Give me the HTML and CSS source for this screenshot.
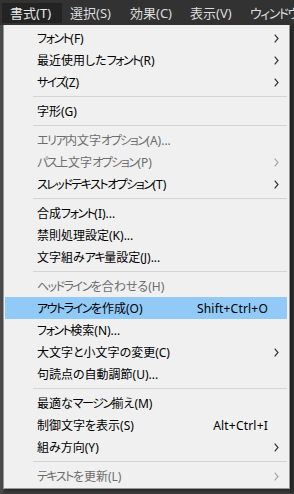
FILE: index.html
```html
<!DOCTYPE html>
<html lang="ja">

<head>
    <meta charset="UTF-8" />
    <meta name="viewport" content="width=device-width, initial-scale=1.0" />
    <title>書式メニュー</title>
    <link rel="stylesheet" href="styles.css">
</head>

<body>
    <div class="menubar">
        <span class="top-item open">書式(T)</span>
        <span class="top-item">選択(S)</span>
        <span class="top-item">効果(C)</span>
        <span class="top-item">表示(V)</span>
        <span class="top-item"><span class="kn">ウィンドウ</span>(W)</span>
    </div>

    <div class="menu">
        <div class="row"><span class="label"><span class="kn">フォント</span>(F)</span><span class="key"></span><span class="arrow"><svg width="5" height="9" viewBox="0 0 5 9"><path d="M0.7 0.7 L4 4.5 L0.7 8.3" /></svg></span></div>
        <div class="row"><span class="label">最近使用した<span class="kn">フォント</span>(R)</span><span class="key"></span><span class="arrow"><svg width="5" height="9" viewBox="0 0 5 9"><path d="M0.7 0.7 L4 4.5 L0.7 8.3" /></svg></span></div>
        <div class="row"><span class="label"><span class="kn">サイズ</span>(Z)</span><span class="key"></span><span class="arrow"><svg width="5" height="9" viewBox="0 0 5 9"><path d="M0.7 0.7 L4 4.5 L0.7 8.3" /></svg></span></div>
        <div class="sep"></div>
        <div class="row"><span class="label">字形(G)</span></div>
        <div class="sep"></div>
        <div class="row disabled"><span class="label"><span class="kn">エリア</span>内文字<span class="kn">オプション</span>(A)...</span></div>
        <div class="row disabled"><span class="label"><span class="kn">パス</span>上文字<span class="kn">オプション</span>(P)</span><span class="key"></span><span class="arrow"><svg width="5" height="9" viewBox="0 0 5 9"><path d="M0.7 0.7 L4 4.5 L0.7 8.3" /></svg></span></div>
        <div class="row"><span class="label"><span class="kn">スレッドテキストオプション</span>(T)</span><span class="key"></span><span class="arrow"><svg width="5" height="9" viewBox="0 0 5 9"><path d="M0.7 0.7 L4 4.5 L0.7 8.3" /></svg></span></div>
        <div class="sep"></div>
        <div class="row"><span class="label">合成<span class="kn">フォント</span>(I)...</span></div>
        <div class="row"><span class="label">禁則処理設定(K)...</span></div>
        <div class="row"><span class="label">文字組み<span class="kn">アキ</span>量設定(J)...</span></div>
        <div class="sep"></div>
        <div class="row disabled"><span class="label"><span class="kn">ヘッドライン</span>を合わせる(H)</span></div>
        <div class="row active"><span class="label"><span class="kn">アウトライン</span>を作成(O)</span><span class="key">Shift+Ctrl+O</span><span class="arrow"></span></div>
        <div class="row"><span class="label"><span class="kn">フォント</span>検索(N)...</span></div>
        <div class="row"><span class="label">大文字と小文字の変更(C)</span><span class="key"></span><span class="arrow"><svg width="5" height="9" viewBox="0 0 5 9"><path d="M0.7 0.7 L4 4.5 L0.7 8.3" /></svg></span></div>
        <div class="row"><span class="label">句読点の自動調節(U)...</span></div>
        <div class="sep"></div>
        <div class="row"><span class="label">最適な<span class="kn">マージン</span>揃え(M)</span></div>
        <div class="row"><span class="label">制御文字を表示(S)</span><span class="key">Alt+Ctrl+I</span><span class="arrow"></span></div>
        <div class="row"><span class="label">組み方向(Y)</span><span class="key"></span><span class="arrow"><svg width="5" height="9" viewBox="0 0 5 9"><path d="M0.7 0.7 L4 4.5 L0.7 8.3" /></svg></span></div>
        <div class="sep"></div>
        <div class="row disabled"><span class="label"><span class="kn">テキスト</span>を更新(L)</span><span class="key"></span><span class="arrow"><svg width="5" height="9" viewBox="0 0 5 9"><path d="M0.7 0.7 L4 4.5 L0.7 8.3" /></svg></span></div>
    </div>
</body>

</html>
```

FILE: styles.css
```css
body {
    margin: 0;
    width: 294px;
    height: 494px;
    overflow: hidden;
    font-family: "Noto Sans", "Noto Sans CJK JP", sans-serif;
    background: linear-gradient(90deg, #4a4a4a 0, #4a4a4a 3px, #3c3c3c 3px, #3c3c3c 290px, #2f2f2f 290px);
}

.kn {
    letter-spacing: -1.5px;
}

.menubar {
    height: 25px;
    background-color: #323232;
    display: flex;
    align-items: center;
    padding-left: 2px;
    overflow: hidden;
    white-space: nowrap;
}

.top-item {
    flex: 0 0 60px;
    box-sizing: border-box;
    color: #dcdcdc;
    font-size: 13px;
    line-height: 20px;
    padding-left: 8px;
    font-feature-settings: "palt";
}

.top-item.open {
    background-color: #232323;
    color: #e8e8e8;
}

.menu {
    margin-left: 3px;
    width: 285px;
    padding: 2px 0 1px 0;
    background-color: #f0f0f0;
    border: 1px solid #979797;
    border-top: none;
    box-shadow: 2px 2px 3px rgba(0, 0, 0, 0.35);
}

.row {
    height: 22px;
    margin: 0 2px 0 1px;
    display: flex;
    align-items: center;
    font-size: 12px;
    color: #000;
    font-feature-settings: "palt";
}

.row .label {
    padding-left: 32px;
    flex: 1;
    white-space: nowrap;
}

.row .key {
    white-space: nowrap;
    letter-spacing: 0.2px;
}

.row .arrow {
    width: 19px;
    display: flex;
    align-items: center;
}

.row .arrow svg {
    margin-left: 6px;
}

.row .arrow path {
    fill: none;
    stroke: #333;
    stroke-width: 1.2;
}

.row.disabled {
    color: #6d6d6d;
}

.row.disabled .arrow path {
    stroke: #a8a8a8;
}

.row.active {
    background-color: #91c9f7;
}

.sep {
    height: 7px;
    display: flex;
    align-items: center;
    padding-left: 29px;
    margin-right: 2px;
}

.sep::after {
    content: "";
    flex: 1;
    height: 1px;
    background-color: #d4d4d4;
}
```
